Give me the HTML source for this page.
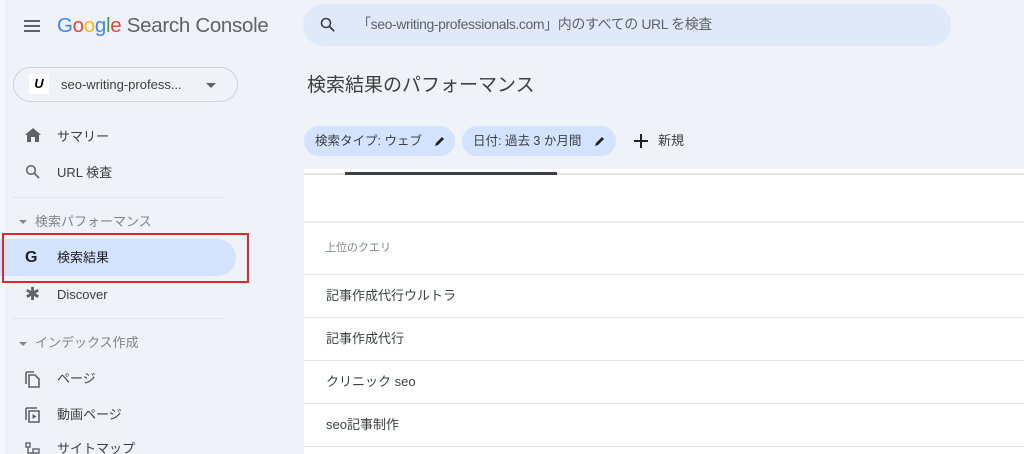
<!DOCTYPE html>
<html style="width:1024px;height:454px;overflow:hidden"><head><meta charset="utf-8"><style>
*{margin:0;padding:0;box-sizing:border-box}
body{width:1024px;height:454px;overflow:hidden;background:#eff2f8;font-family:"Liberation Sans","Noto Sans CJK JP",sans-serif;color:#3c4043;position:relative;line-height:1.15}
.a{position:absolute}
.strip{left:0;top:0;width:5px;height:454px;background:#f5f7fb}
.nav{font-size:13px;color:#3c4043}
.sec{font-size:13px;color:#80868b}
.row{position:absolute;left:304px;width:720px;border-top:1px solid #e3e3e3;height:43px}
.row span{position:absolute;left:22px;top:14px;font-size:13px;color:#3c4043}
.chip{position:absolute;top:126px;height:30px;border-radius:15px;background:#d3e3fd;font-size:12.5px;color:#3c4043;line-height:30px;padding-left:11px}
</style></head><body>
<div class="a strip"></div>
<div class="a" style="left:24px;top:20px;width:16px;height:2px;background:#5f6368"></div>
<div class="a" style="left:24px;top:25px;width:16px;height:2px;background:#5f6368"></div>
<div class="a" style="left:24px;top:30px;width:16px;height:2px;background:#5f6368"></div>
<div class="a" style="left:57px;top:14px;font-size:20.5px;letter-spacing:-0.3px;white-space:nowrap"><span style="color:#4285f4">G</span><span style="color:#ea4335">o</span><span style="color:#fbbc05">o</span><span style="color:#4285f4">g</span><span style="color:#34a853">l</span><span style="color:#ea4335">e</span> <span style="color:#5f6368">Search Console</span></div>
<div class="a" style="left:13px;top:67px;width:225px;height:35px;border:1px solid #cfd3d8;border-radius:18px"></div>
<div class="a" style="left:29px;top:74px;width:20px;height:20px;background:#fff;font:italic bold 13px 'Liberation Sans';text-align:center;line-height:20px;color:#000">U</div>
<div class="a nav" style="left:61px;top:78px">seo-writing-profess...</div>
<div class="a" style="left:206px;top:83px;border-left:5px solid transparent;border-right:5px solid transparent;border-top:5px solid #5f6368"></div>
<svg class="a" style="left:25px;top:128px" width="16" height="14" viewBox="0 0 16 14"><path d="M8 0L0 7h2v7h4V9h4v5h4V7h2z" fill="#5f6368"/></svg>
<div class="a nav" style="left:57px;top:130px">サマリー</div>
<svg class="a" style="left:25px;top:164px" width="16" height="16" viewBox="0 0 16 16"><circle cx="6" cy="6" r="4.3" fill="none" stroke="#5f6368" stroke-width="1.5"/><path d="M9 9l5 5" stroke="#5f6368" stroke-width="1.6"/></svg>
<div class="a nav" style="left:57px;top:166px">URL 検査</div>
<div class="a" style="left:13px;top:197px;width:212px;height:1px;background:#e0e3e7"></div>
<div class="a" style="left:19px;top:220px;border-left:4px solid transparent;border-right:4px solid transparent;border-top:4px solid #80868b"></div>
<div class="a sec" style="left:35px;top:215px">検索パフォーマンス</div>
<div class="a" style="left:0;top:239px;width:236px;height:37px;background:#d3e3fd;border-radius:0 19px 19px 0"></div>
<div class="a" style="left:2px;top:233px;width:247px;height:50px;border:2px solid #e5232a"></div>
<div class="a" style="left:25px;top:249px;font:bold 16px 'Liberation Sans';color:#202124">G</div>
<div class="a nav" style="left:57px;top:251px;color:#202124">検索結果</div>
<div class="a" style="left:25px;top:284px;font:bold 18px 'DejaVu Sans';color:#5f6368">✱</div>
<div class="a nav" style="left:57px;top:288px">Discover</div>
<div class="a" style="left:13px;top:318px;width:212px;height:1px;background:#e0e3e7"></div>
<div class="a" style="left:19px;top:342px;border-left:4px solid transparent;border-right:4px solid transparent;border-top:4px solid #80868b"></div>
<div class="a sec" style="left:35px;top:336px">インデックス作成</div>
<svg class="a" style="left:25px;top:370px" width="16" height="18" viewBox="0 0 16 18"><path d="M1 2v12M1 2h8M4 5h6l4 4v8H4z" fill="none" stroke="#5f6368" stroke-width="1.6"/></svg>
<div class="a nav" style="left:57px;top:372px">ページ</div>
<svg class="a" style="left:25px;top:406px" width="16" height="18" viewBox="0 0 16 18"><path d="M1 2v12M1 2h11M4 5h10v11H4z" fill="none" stroke="#5f6368" stroke-width="1.6"/><path d="M7.5 8v5l4-2.5z" fill="#5f6368"/></svg>
<div class="a nav" style="left:57px;top:408px">動画ページ</div>
<svg class="a" style="left:25px;top:442px" width="16" height="12" viewBox="0 0 16 12"><rect x="1" y="1" width="4" height="4" fill="none" stroke="#5f6368" stroke-width="1.4"/><path d="M3 5v6h5" stroke="#5f6368" stroke-width="1.4" fill="none"/><rect x="8" y="7" width="6" height="4" fill="none" stroke="#5f6368" stroke-width="1.4"/></svg>
<div class="a nav" style="left:57px;top:442px">サイトマップ</div>
<div class="a" style="left:303px;top:4px;width:648px;height:42px;border-radius:21px;background:#e0e9fa"></div>
<svg class="a" style="left:320px;top:17px" width="16" height="16" viewBox="0 0 16 16"><circle cx="6" cy="6" r="4.5" fill="none" stroke="#3c4043" stroke-width="1.6"/><path d="M9.2 9.2l5 5" stroke="#3c4043" stroke-width="1.8"/></svg>
<div class="a" style="left:357px;top:16px;font-size:14px;color:#5f6368;letter-spacing:-0.4px">「seo-writing-professionals.com」内のすべての URL を検査</div>
<div class="a" style="left:307px;top:75px;font-size:19px;color:#3c4043">検索結果のパフォーマンス</div>
<div class="chip" style="left:304px;width:151px">検索タイプ: ウェブ</div>
<div class="chip" style="left:462px;width:154px">日付: 過去 3 か月間</div>
<svg class="a" style="left:434px;top:135px" width="12" height="12" viewBox="0 0 12 12"><path d="M1 11l1-3 6-6 2 2-6 6z" fill="#202124"/></svg>
<svg class="a" style="left:594px;top:135px" width="12" height="12" viewBox="0 0 12 12"><path d="M1 11l1-3 6-6 2 2-6 6z" fill="#202124"/></svg>
<div class="a" style="left:634px;top:140px;width:14px;height:2px;background:#202124"></div>
<div class="a" style="left:640px;top:134px;width:2px;height:14px;background:#202124"></div>
<div class="a" style="left:658px;top:134px;font-size:13px;color:#3c4043">新規</div>
<div class="a" style="left:304px;top:169px;width:720px;height:285px;background:#fff"></div>
<div class="a" style="left:304px;top:173px;width:720px;height:2px;background:#e3e3e3"></div>
<div class="a" style="left:345px;top:172px;width:212px;height:3px;background:#3c4043"></div>
<div class="a" style="left:304px;top:221px;width:720px;height:2px;background:#eeeeee"></div>
<div class="a" style="left:325px;top:242px;font-size:11px;color:#80868b">上位のクエリ</div>
<div class="row" style="top:274px"><span>記事作成代行ウルトラ</span></div>
<div class="row" style="top:317px"><span>記事作成代行</span></div>
<div class="row" style="top:360px"><span>クリニック seo</span></div>
<div class="row" style="top:403px"><span>seo記事制作</span></div>
<div class="a" style="left:304px;top:446px;width:720px;height:1px;background:#e3e3e3"></div>
</body></html>
